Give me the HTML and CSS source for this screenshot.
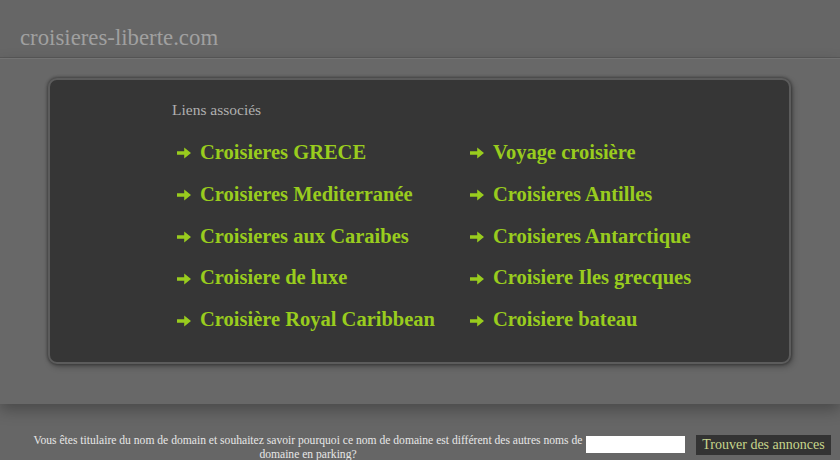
FILE: index.html
```html
<!DOCTYPE html>
<html lang="fr">
<head>
<meta charset="utf-8">
<title>croisieres-liberte.com</title>
<link rel="stylesheet" href="styles.css">
</head>
<body>
<header class="top">
  <div class="site">croisieres-liberte.com</div>
</header>
<main class="band">
  <section class="box">
    <h2 class="heading">Liens associés</h2>
    <ul class="links">
      <li><svg class="arr" viewBox="0 0 14 12"><path d="M0 4.3H7.2V0.6L14 6L7.2 11.4V7.7H0Z"/></svg>Croisieres GRECE</li>
      <li><svg class="arr" viewBox="0 0 14 12"><path d="M0 4.3H7.2V0.6L14 6L7.2 11.4V7.7H0Z"/></svg>Voyage croisière</li>
      <li><svg class="arr" viewBox="0 0 14 12"><path d="M0 4.3H7.2V0.6L14 6L7.2 11.4V7.7H0Z"/></svg>Croisieres Mediterranée</li>
      <li><svg class="arr" viewBox="0 0 14 12"><path d="M0 4.3H7.2V0.6L14 6L7.2 11.4V7.7H0Z"/></svg>Croisieres Antilles</li>
      <li><svg class="arr" viewBox="0 0 14 12"><path d="M0 4.3H7.2V0.6L14 6L7.2 11.4V7.7H0Z"/></svg>Croisieres aux Caraibes</li>
      <li><svg class="arr" viewBox="0 0 14 12"><path d="M0 4.3H7.2V0.6L14 6L7.2 11.4V7.7H0Z"/></svg>Croisieres Antarctique</li>
      <li><svg class="arr" viewBox="0 0 14 12"><path d="M0 4.3H7.2V0.6L14 6L7.2 11.4V7.7H0Z"/></svg>Croisiere de luxe</li>
      <li><svg class="arr" viewBox="0 0 14 12"><path d="M0 4.3H7.2V0.6L14 6L7.2 11.4V7.7H0Z"/></svg>Croisiere Iles grecques</li>
      <li><svg class="arr" viewBox="0 0 14 12"><path d="M0 4.3H7.2V0.6L14 6L7.2 11.4V7.7H0Z"/></svg>Croisière Royal Caribbean</li>
      <li><svg class="arr" viewBox="0 0 14 12"><path d="M0 4.3H7.2V0.6L14 6L7.2 11.4V7.7H0Z"/></svg>Croisiere bateau</li>
    </ul>
  </section>
</main>
<footer class="foot">
  <p class="question">Vous êtes titulaire du nom de domain et souhaitez savoir pourquoi ce nom de domaine est différent des autres noms de domaine en parking?</p>
  <input class="field" type="text">
  <button class="find">Trouver des annonces</button>
</footer>
</body>
</html>
```
FILE: styles.css
```css
* { box-sizing: border-box; }
html, body { margin: 0; padding: 0; }
body {
  background: #666666;
  font-family: "Liberation Serif", "DejaVu Serif", serif;
  width: 840px;
  height: 460px;
  overflow: hidden;
}
.top {
  height: 58px;
  border-bottom: 1px solid #595959;
  padding: 25px 0 0 20px;
}
.site {
  color: #a0a0a0;
  font-size: 22.8px;
  line-height: 26px;
}
.band {
  background: #686868;
  border-top: 1px solid #737373;
  height: 346px;
  padding: 19px 48px 0 48px;
  box-shadow: 0 6px 14px rgba(0,0,0,0.28);
  position: relative;
  z-index: 1;
}
.box {
  width: 743px;
  height: 286px;
  background: #363636;
  border: 2px solid #5c5c5c;
  border-radius: 9px;
  box-shadow: 0 0 3px 1px rgba(0,0,0,0.35), 2px 3px 6px rgba(0,0,0,0.25);
  padding: 20px 0 0 122px;
}
.heading {
  margin: 0;
  color: #b0b0b0;
  font-weight: normal;
  font-size: 15.5px;
  line-height: 20px;
}
.links {
  list-style: none;
  margin: 12px 0 0 5px;
  padding: 0;
  display: grid;
  grid-template-columns: 293px 293px;
  grid-auto-rows: 41.8px;
}
.links li {
  display: flex;
  align-items: center;
  color: #99cc1e;
  font-size: 20.5px;
  font-weight: bold;
  line-height: 41.8px;
  white-space: nowrap;
}
.arr {
  width: 14px;
  height: 12px;
  margin: 1px 9px 0 0;
  fill: #99cc1e;
  flex: none;
}
.foot {
  display: flex;
  align-items: flex-start;
  padding: 24px 0 0 28px;
}
.question {
  margin: 6px 0 0 0;
  width: 560px;
  text-align: center;
  color: #e6e6e6;
  font-size: 11.6px;
  line-height: 14px;
}
.field {
  width: 99px;
  height: 17px;
  margin: 8px 0 0 -2px;
  border: none;
  background: #ffffff;
  padding: 0;
}
.find {
  margin: 7px 0 0 11px;
  height: 20px;
  width: 135px;
  padding: 0;
  border: none;
  background: #333333;
  color: #c7d68c;
  font-family: "Liberation Serif", "DejaVu Serif", serif;
  font-size: 14px;
  line-height: 20px;
}
```
